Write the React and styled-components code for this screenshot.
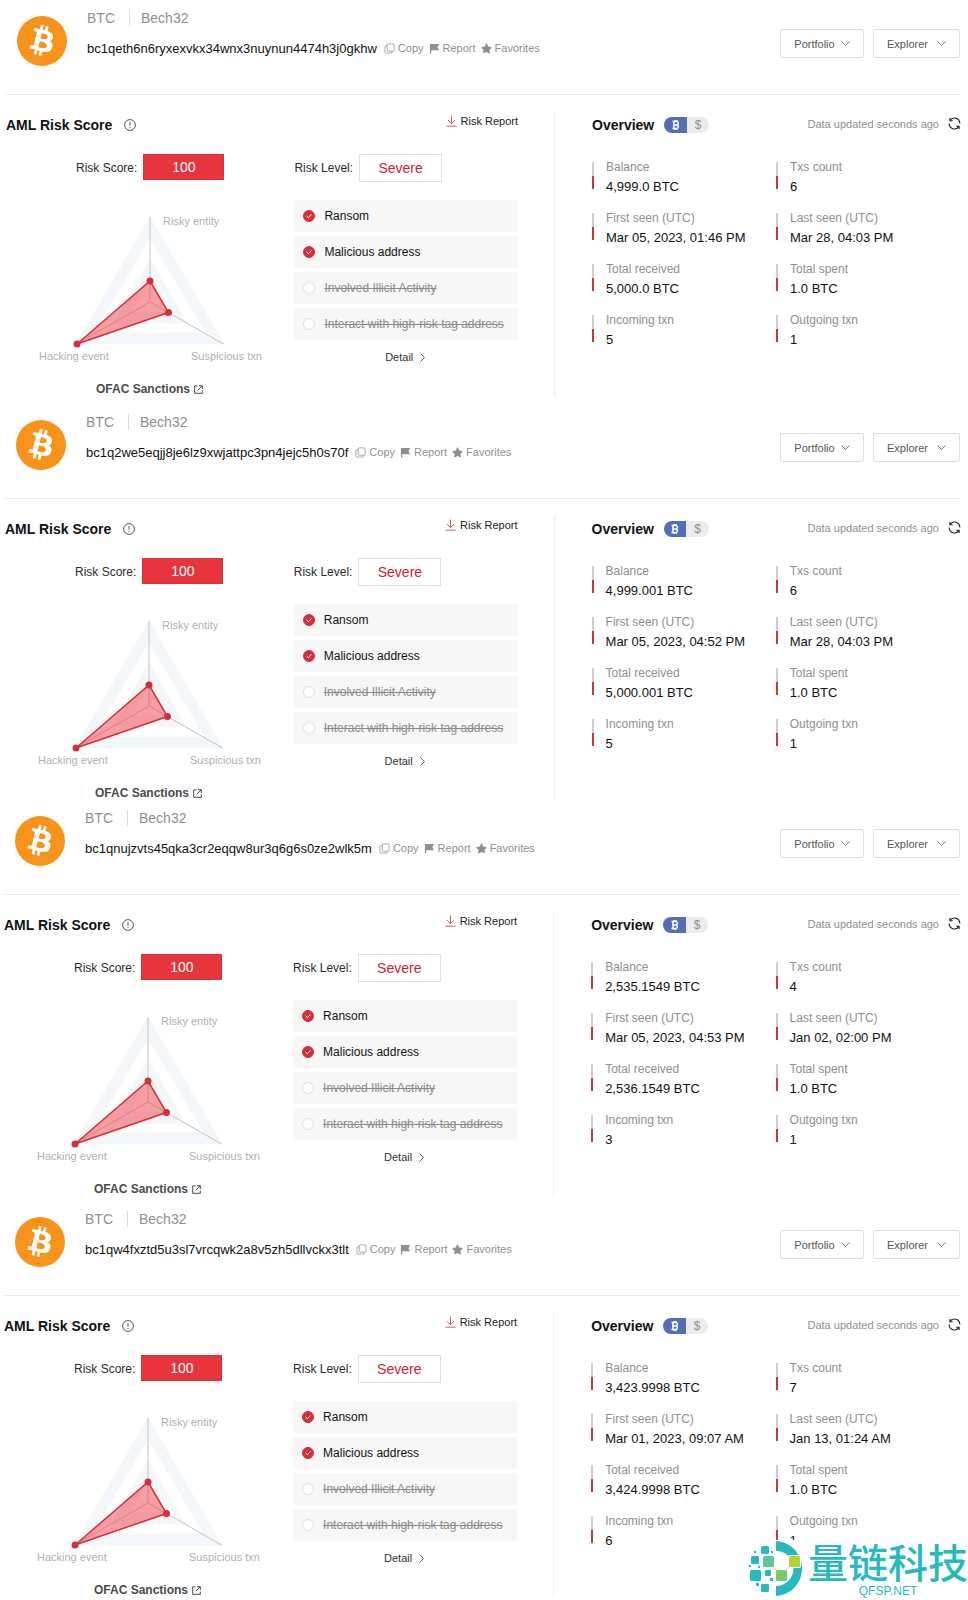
import React from 'react';
import styled, {createGlobalStyle} from 'styled-components';
import {FaStar} from 'react-icons/fa';

const GlobalStyle = createGlobalStyle`
  * {
    box-sizing: border-box;
  }

  body {
    margin: 0;
    background: #fff;
    color: #1c1c1c;
    font-family: 'Liberation Sans', Arial, sans-serif;
    font-size: 12px;
  }

  button {
    padding: 0;
    border: 0;
    background: none;
    color: inherit;
    font: inherit;
    cursor: pointer;
  }

  a {
    color: inherit;
    text-decoration: none;
  }

  h2, p, ul, dl, dd {
    margin: 0;
    padding: 0;
  }
`;

const wallets = [
  {
    address: 'bc1qeth6n6ryxexvkx34wnx3nuynun4474h3j0gkhw',
    inset: 6,
    gap: 8,
    stats: [
      ['Balance', '4,999.0 BTC'],
      ['Txs count', '6'],
      ['First seen (UTC)', 'Mar 05, 2023, 01:46 PM'],
      ['Last seen (UTC)', 'Mar 28, 04:03 PM'],
      ['Total received', '5,000.0 BTC'],
      ['Total spent', '1.0 BTC'],
      ['Incoming txn', '5'],
      ['Outgoing txn', '1'],
    ],
  },
  {
    address: 'bc1q2we5eqjj8je6lz9xwjattpc3pn4jejc5h0s70f',
    inset: 5,
    gap: 0,
    stats: [
      ['Balance', '4,999.001 BTC'],
      ['Txs count', '6'],
      ['First seen (UTC)', 'Mar 05, 2023, 04:52 PM'],
      ['Last seen (UTC)', 'Mar 28, 04:03 PM'],
      ['Total received', '5,000.001 BTC'],
      ['Total spent', '1.0 BTC'],
      ['Incoming txn', '5'],
      ['Outgoing txn', '1'],
    ],
  },
  {
    address: 'bc1qnujzvts45qka3cr2eqqw8ur3q6g6s0ze2wlk5m',
    inset: 4,
    gap: 5,
    stats: [
      ['Balance', '2,535.1549 BTC'],
      ['Txs count', '4'],
      ['First seen (UTC)', 'Mar 05, 2023, 04:53 PM'],
      ['Last seen (UTC)', 'Jan 02, 02:00 PM'],
      ['Total received', '2,536.1549 BTC'],
      ['Total spent', '1.0 BTC'],
      ['Incoming txn', '3'],
      ['Outgoing txn', '1'],
    ],
  },
  {
    address: 'bc1qw4fxztd5u3sl7vrcqwk2a8v5zh5dllvckx3tlt',
    inset: 4,
    gap: 3,
    stats: [
      ['Balance', '3,423.9998 BTC'],
      ['Txs count', '7'],
      ['First seen (UTC)', 'Mar 01, 2023, 09:07 AM'],
      ['Last seen (UTC)', 'Jan 13, 01:24 AM'],
      ['Total received', '3,424.9998 BTC'],
      ['Total spent', '1.0 BTC'],
      ['Incoming txn', '6'],
      ['Outgoing txn', '1'],
    ],
  },
];

const risks = [
  {label: 'Ransom', active: true},
  {label: 'Malicious address', active: true},
  {label: 'Involved Illicit Activity', active: false},
  {label: 'Interact with high-risk tag address', active: false},
];

const Page = styled.main`
  position: relative;
  overflow: hidden;
`;

const Wallet = styled.section`
  padding: 0 8px ${props => props.$gap}px ${props => props.$inset}px;
`;

const Header = styled.header`
  display: flex;
  align-items: flex-start;
  height: 95px;
  border-bottom: 1px solid #ececec;
`;

const Coin = styled.svg`
  flex: none;
  width: 50px;
  height: 50px;
  margin: 16px 20px 0 11px;
`;

const Identity = styled.div`
  flex: 1;
  padding-top: 10px;
`;

const Kind = styled.p`
  display: flex;
  align-items: center;
  height: 16px;
  color: #8f8f8f;
  font-size: 14px;

  span + span {
    margin-left: 14px;
    padding-left: 11px;
    border-left: 1px solid #dcdcdc;
  }
`;

const AddressRow = styled.div`
  display: flex;
  align-items: center;
  height: 16px;
  margin-top: 14px;
  white-space: nowrap;
`;

const Address = styled.span`
  margin-right: 7px;
  color: #111;
  font-size: 13px;
`;

const AddressAction = styled.button`
  display: flex;
  align-items: center;
  gap: 3px;
  margin-right: 5px;
  color: #8f8f8f;
  font-size: 11px;

  svg {
    width: 11px;
    height: 11px;
  }
`;

const Menus = styled.div`
  display: flex;
  gap: 9px;
  padding-top: 29px;
`;

const MenuButton = styled.button`
  display: flex;
  align-items: center;
  justify-content: center;
  gap: ${props => (props.$wide ? 9 : 6)}px;
  width: ${props => (props.$wide ? 87 : 84)}px;
  height: 29px;
  border: 1px solid #dedede;
  border-radius: 2px;
  color: #555;
  font-size: 11px;
`;

const Body = styled.div`
  display: grid;
  grid-template-columns: minmax(0, 549fr) minmax(0, 405fr);
  padding-top: 17px;
`;

const RiskPanel = styled.div`
  height: 284px;
  padding-right: 36px;
  border-right: 1px solid #ededed;
`;

const PanelHead = styled.div`
  display: flex;
  align-items: center;
  height: 26px;
`;

const Title = styled.h2`
  color: #111;
  font-size: 14px;
  font-weight: bold;
`;

const InfoButton = styled.button`
  display: flex;
  margin-left: 12px;
  color: #444;
`;

const ReportLink = styled.a`
  display: flex;
  align-items: center;
  gap: 4px;
  margin: 0 0 8px auto;
  color: #222;
  font-size: 11px;
`;

const RiskColumns = styled.div`
  display: grid;
  grid-template-columns: minmax(0, 289fr) minmax(0, 224fr);
  padding-top: 16px;
`;

const ScoreRow = styled.p`
  display: flex;
  align-items: center;
  gap: 6px;
  height: 28px;
  padding-left: ${props => props.$indent || 0}px;
  color: #2b2b2b;
`;

const Score = styled.strong`
  display: grid;
  place-items: center;
  width: 81px;
  height: 26px;
  margin-bottom: 2px;
  border: 1px solid #d5323a;
  background: #e8343d;
  color: #fff;
  font-size: 14px;
  font-weight: normal;
`;

const Level = styled.strong`
  display: grid;
  place-items: center;
  width: 83px;
  height: 28px;
  border: 1px solid #e0e0e0;
  color: #cf222c;
  font-size: 14px;
  font-weight: normal;
`;

const Radar = styled.svg`
  display: block;
  width: 240px;
  height: 160px;
  margin: 24px 0 0 30px;

  text {
    fill: #b0b0b0;
    font-size: 11px;
  }
`;

const SanctionsLink = styled.a`
  display: flex;
  align-items: center;
  gap: 4px;
  width: max-content;
  height: 16px;
  margin: 15px 0 0 90px;
  color: #4a4a4a;
  font-weight: bold;
`;

const RiskList = styled.ul`
  display: grid;
  gap: 4px;
  margin-top: 18px;
  list-style: none;
`;

const RiskItem = styled.li`
  display: flex;
  align-items: center;
  gap: 9px;
  height: 32px;
  padding-left: 9px;
  background: #f7f7f7;
  color: ${props => (props.$active ? '#111' : '#8a8a8a')};
  text-decoration: ${props => (props.$active ? 'none' : 'line-through')};
  white-space: nowrap;
`;

const DetailButton = styled.button`
  display: flex;
  align-items: center;
  gap: 5px;
  height: 16px;
  margin: 9px auto 0;
  color: #333;
  font-size: 11px;
`;

const OverviewPanel = styled.div`
  padding-left: 37px;
`;

const Toggle = styled.div`
  display: flex;
  width: 45px;
  height: 16px;
  margin-left: 10px;
  border-radius: 8px;
  overflow: hidden;
`;

const ToggleButton = styled.button`
  display: grid;
  flex: 1;
  place-items: center;
  background: ${props => (props.$on ? '#556cb8' : '#ececec')};
  color: ${props => (props.$on ? '#fff' : '#8f8f8f')};
  font-size: 12px;
`;

const Refresh = styled.div`
  display: flex;
  align-items: center;
  gap: 9px;
  margin: 0 -1px 3px auto;
  color: #8f8f8f;
  font-size: 11px;
`;

const RefreshButton = styled.button`
  display: flex;
  color: #222;
`;

const Stats = styled.dl`
  display: grid;
  grid-template-columns: repeat(2, minmax(0, 1fr));
  row-gap: 24px;
  padding-top: 24px;
`;

const Stat = styled.div`
  height: 27px;
  padding-left: 12px;
  border-left: 2px solid;
  border-image: linear-gradient(#cfcfcf 52%, #c9343d 52%) 1;
  white-space: nowrap;

  dt {
    height: 14px;
    margin-top: -2px;
    color: #8f8f8f;
    line-height: 14px;
  }

  dd {
    margin-top: 5px;
    color: #111;
    font-size: 13px;
    line-height: 16px;
  }
`;

const Watermark = styled.div`
  position: absolute;
  right: 0;
  bottom: 0;
  display: flex;
  gap: 6px;
  height: 60px;
  background: #fff;
  color: #27b9bd;
`;

const Brand = styled.div`
  display: flex;
  flex-direction: column;
  align-items: center;
  padding-top: 3px;
  font-size: 12px;
  line-height: 10px;
`;

const BrandName = styled.span`
  font-family: 'Liberation Sans', 'Noto Sans CJK SC', sans-serif;
  font-size: 40px;
  font-weight: 500;
  line-height: 43px;
`;

const CoinLogo = () => (
  <Coin viewBox="0 0 64 64" aria-label="Bitcoin">
    <circle cx="32" cy="32" r="32" fill="#f7931a" />
    <path
      fill="#fff"
      d="M46.1 27.4c.6-4.3-2.6-6.5-7-8.1l1.4-5.7-3.5-.9-1.4 5.6-2.8-.7 1.4-5.6-3.5-.9-1.4 5.7-2.2-.5-4.8-1.2-.9 3.7s2.6.6 2.5.6c1.4.4 1.7 1.3 1.6 2l-1.6 6.5.4.1-.4-.1-2.3 9.1c-.2.4-.6 1.1-1.6.8 0 .1-2.5-.6-2.5-.6l-1.7 4 4.5 1.1 2.5.7-1.5 5.7 3.5.9 1.4-5.7 2.8.7-1.4 5.7 3.5.9 1.4-5.7c6 1.1 10.5.7 12.4-4.7 1.5-4.4-.1-6.9-3.2-8.5 2.3-.6 4-2.1 4.4-5.2zm-8 11.2c-1.1 4.3-8.4 2-10.8 1.4l1.9-7.7c2.4.6 10 1.8 8.9 6.3zm1.1-11.3c-1 4-7.1 1.9-9.1 1.4l1.8-7c2 .5 8.3 1.5 7.3 5.6z"
    />
  </Coin>
);

const CopyIcon = () => (
  <svg viewBox="0 0 12 12" fill="none" stroke="currentColor" strokeWidth="0.8">
    <rect x="3.5" y="1" width="7.5" height="8" rx="1" />
    <path d="M3.5 3H2a1 1 0 0 0-1 1v6a1 1 0 0 0 1 1h6a1 1 0 0 0 1-1V9" />
  </svg>
);

const FlagIcon = () => (
  <svg viewBox="0 0 12 12" fill="currentColor">
    <path d="M1 1h10L9.2 4.5 11 8H2.4v3.5H1z" />
  </svg>
);

const Chevron = ({right}) => (
  <svg width="9" height="9" viewBox="0 0 9 9" fill="none" stroke="currentColor" strokeWidth="0.8">
    <path d={right ? 'M2.5 0.5l4 4-4 4' : 'M0.5 2.5l4 4 4-4'} />
  </svg>
);

const InfoIcon = () => (
  <svg width="12" height="12" viewBox="0 0 12 12" fill="none" stroke="currentColor" strokeWidth="0.9">
    <circle cx="6" cy="6" r="5.4" />
    <path d="M6 3v3.8M6 8v1" />
  </svg>
);

const DownloadIcon = () => (
  <svg width="11" height="12" viewBox="0 0 11 12" fill="none" stroke="#d9444d" strokeWidth="0.9">
    <path d="M5.5 0.5v8M2 5.2l3.5 3.4L9 5.2M0.5 11.2h10" />
  </svg>
);

const ExternalIcon = () => (
  <svg width="9" height="9" viewBox="0 0 9 9" fill="none" stroke="currentColor">
    <path d="M3.5 0.9H0.7v7.4h7.6V5.5M5 0.7h3.3V4M8.2 0.8L3.8 5.2" />
  </svg>
);

const RefreshIcon = () => (
  <svg width="13" height="13" viewBox="0 0 13 13" fill="none" stroke="currentColor" strokeWidth="1.1">
    <path d="M2 3.6A5.3 5.3 0 0 1 11.8 6.5M1.9 1v2.8h2.8M11 9.4A5.3 5.3 0 0 1 1.2 6.5M11.1 12V9.2H8.3" />
  </svg>
);

const RiskMark = ({active}) => (
  <svg width="12" height="12" viewBox="0 0 12 12" fill="none">
    <circle cx="6" cy="6" r="5.5" fill={active ? '#d5303a' : '#fff'} stroke={active ? '#d5303a' : '#dedede'} />
    {active && <path d="M3.6 6l1.8 1.7 3-3.2" stroke="#fff" />}
  </svg>
);

const RiskRadar = () => (
  <Radar viewBox="0 0 240 160">
    <g stroke="#eef2f5" strokeWidth="0.5">
      <path d="M114 11L188 138H40z" fill="#f4f7fa" />
      <path d="M114 32L170 127H58z" fill="#fff" />
      <path d="M114 53L151 117H77z" fill="#f4f7fa" />
      <path d="M114 75L133 106H95z" fill="#fff" />
    </g>
    <path d="M114 11v85l73.5 42M114 96L40 138" fill="none" stroke="#c4c4c4" />
    <path d="M114 75l18.5 31.5L41 138z" fill="#ee3e48" fillOpacity="0.5" stroke="#d5303a" strokeWidth="1.5" />
    <g fill="#d5303a">
      <circle cx="114" cy="75" r="3.5" />
      <circle cx="132.5" cy="106.5" r="3.5" />
      <circle cx="41" cy="138" r="3.5" />
    </g>
    <text x="127" y="19">Risky entity</text>
    <text x="3" y="154">Hacking event</text>
    <text x="155" y="154">Suspicious txn</text>
  </Radar>
);

const BrandLogo = () => (
  <svg width="56" height="60" viewBox="0 0 56 60" fill="#27b9bd">
    <path d="M30 1a27 27 0 0 1 26 27.500A27 27 0 0 1 30 56V46a17.500 17.500 0 0 0 0-35z" />
    <path d="M22 22L35 35L48 22" fill="none" stroke="#b9dfb0" />
    <rect x="15" y="6" width="8" height="8" rx="1.5" />
    <rect x="5" y="16" width="8" height="8" rx="1.5" />
    <rect x="17" y="16" width="11" height="11" rx="1.5" fill="#5fc59b" />
    <rect x="4" y="30" width="11" height="11" rx="1.5" />
    <rect x="19" y="30" width="6" height="6" rx="1" />
    <rect x="30" y="30" width="11" height="11" rx="1.5" fill="#7bcb62" />
    <rect x="42" y="15" width="13" height="13" rx="2" fill="#fff" />
    <rect x="43" y="16" width="11" height="11" rx="1.5" fill="#b2d235" />
    <rect x="15" y="44" width="8" height="8" rx="1.5" />
    <path d="M8 11h2v2H8zM25 11h2v2h-2zM3 25h2v2H3zM12 26h2v2h-2zM10 43h3v3h-3zM24 38h3v3h-3z" />
  </svg>
);

const RiskSection = () => (
  <RiskPanel>
    <PanelHead>
      <Title>AML Risk Score</Title>
      <InfoButton aria-label="About the score">
        <InfoIcon />
      </InfoButton>
      <ReportLink href="#report">
        <DownloadIcon />
        Risk Report
      </ReportLink>
    </PanelHead>
    <RiskColumns>
      <div>
        <ScoreRow $indent={70}>
          Risk Score: <Score>100</Score>
        </ScoreRow>
        <RiskRadar />
        <SanctionsLink href="#ofac">
          OFAC Sanctions
          <ExternalIcon />
        </SanctionsLink>
      </div>
      <div>
        <ScoreRow>
          Risk Level: <Level>Severe</Level>
        </ScoreRow>
        <RiskList>
          {risks.map(({label, active}) => (
            <RiskItem key={label} $active={active}>
              <RiskMark active={active} />
              {label}
            </RiskItem>
          ))}
        </RiskList>
        <DetailButton>
          Detail
          <Chevron right />
        </DetailButton>
      </div>
    </RiskColumns>
  </RiskPanel>
);

const Overview = ({stats}) => (
  <OverviewPanel>
    <PanelHead>
      <Title>Overview</Title>
      <Toggle>
        <ToggleButton $on aria-label="Show in BTC">
          <svg width="8" height="10" viewBox="0 0 8 10" fill="none" stroke="currentColor" strokeWidth="1.5">
            <path d="M0.5 1.5h4.2a1.7 1.7 0 0 1 0 3.4H2M2 5h3a1.8 1.8 0 0 1 0 3.5H0.5M2 1.5v7M3 0v1.5M5 0v1.5M3 8.5V10M5 8.5V10" />
          </svg>
        </ToggleButton>
        <ToggleButton>$</ToggleButton>
      </Toggle>
      <Refresh>
        Data updated seconds ago
        <RefreshButton aria-label="Refresh">
          <RefreshIcon />
        </RefreshButton>
      </Refresh>
    </PanelHead>
    <Stats>
      {stats.map(([label, value]) => (
        <Stat key={label}>
          <dt>{label}</dt>
          <dd>{value}</dd>
        </Stat>
      ))}
    </Stats>
  </OverviewPanel>
);

const App = () => {
  return (
    <>
      <GlobalStyle />
      <Page>
        {wallets.map(wallet => (
          <Wallet key={wallet.address} $inset={wallet.inset} $gap={wallet.gap}>
            <Header>
              <CoinLogo />
              <Identity>
                <Kind>
                  <span>BTC</span>
                  <span>Bech32</span>
                </Kind>
                <AddressRow>
                  <Address>{wallet.address}</Address>
                  <AddressAction>
                    <CopyIcon />
                    Copy
                  </AddressAction>
                  <AddressAction>
                    <FlagIcon />
                    Report
                  </AddressAction>
                  <AddressAction>
                    <FaStar />
                    Favorites
                  </AddressAction>
                </AddressRow>
              </Identity>
              <Menus>
                <MenuButton>
                  Portfolio <Chevron />
                </MenuButton>
                <MenuButton $wide>
                  Explorer <Chevron />
                </MenuButton>
              </Menus>
            </Header>
            <Body>
              <RiskSection />
              <Overview stats={wallet.stats} />
            </Body>
          </Wallet>
        ))}
        <Watermark>
          <BrandLogo />
          <Brand>
            <BrandName>量链科技</BrandName>
            QFSP.NET
          </Brand>
        </Watermark>
      </Page>
    </>
  );
};

export default App;
